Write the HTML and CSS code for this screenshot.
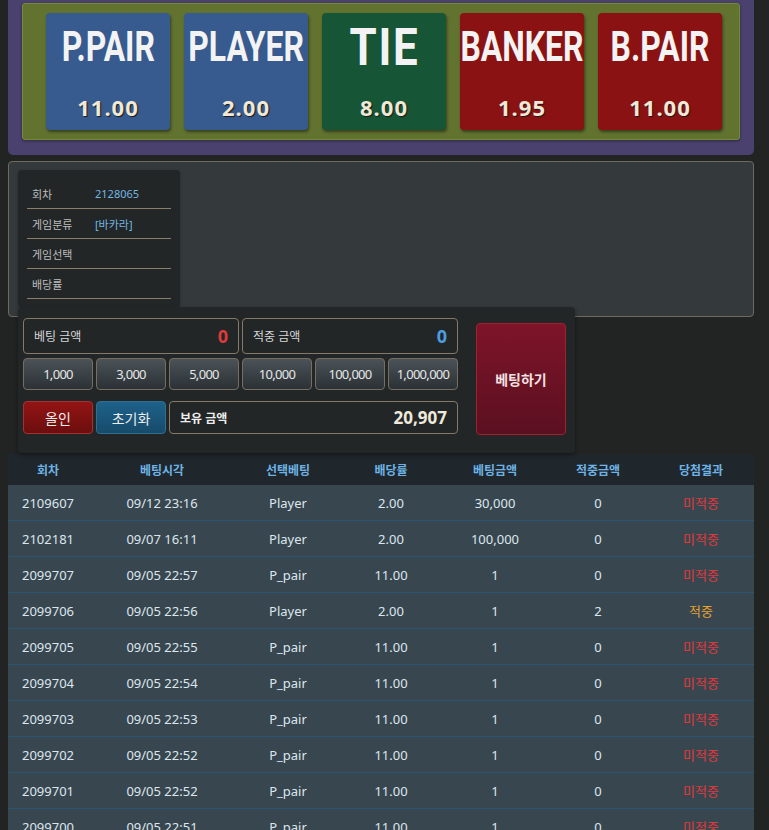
FILE: index.html
```html
<!DOCTYPE html>
<html lang="ko">
<head>
    <meta charset="UTF-8">
    <meta name="viewport" content="width=device-width, initial-scale=1.0">
    <title>바카라</title>
    <link rel="stylesheet" href="styles.css">
</head>
<body>
    <div class="wrap">
        <!-- 배팅 보드 -->
        <div class="board">
            <div class="board-inner">
                <div class="pick pick-blue">
                    <div class="pick-name">P.PAIR</div>
                    <div class="pick-odds">11.00</div>
                </div>
                <div class="pick pick-blue">
                    <div class="pick-name">PLAYER</div>
                    <div class="pick-odds">2.00</div>
                </div>
                <div class="pick pick-green">
                    <div class="pick-name pick-tie">TIE</div>
                    <div class="pick-odds">8.00</div>
                </div>
                <div class="pick pick-red">
                    <div class="pick-name">BANKER</div>
                    <div class="pick-odds">1.95</div>
                </div>
                <div class="pick pick-red">
                    <div class="pick-name">B.PAIR</div>
                    <div class="pick-odds">11.00</div>
                </div>
            </div>
        </div>

        <!-- 게임 정보 -->
        <div class="game-panel">
            <div class="game-info">
                <div class="info-row"><span class="info-label">회차</span><span class="info-value">2128065</span></div>
                <div class="info-row"><span class="info-label">게임분류</span><span class="info-value">[바카라]</span></div>
                <div class="info-row"><span class="info-label">게임선택</span><span class="info-value"></span></div>
                <div class="info-row"><span class="info-label">배당률</span><span class="info-value"></span></div>
            </div>
        </div>

        <!-- 베팅 입력 -->
        <div class="bet-panel">
            <div class="bet-left">
                <div class="bet-sums">
                    <div class="sum-box">
                        <span class="sum-label">베팅 금액</span>
                        <span class="sum-value red">0</span>
                    </div>
                    <div class="sum-box">
                        <span class="sum-label">적중 금액</span>
                        <span class="sum-value blue">0</span>
                    </div>
                </div>
                <div class="chips">
                    <button class="chip">1,000</button>
                    <button class="chip">3,000</button>
                    <button class="chip">5,000</button>
                    <button class="chip">10,000</button>
                    <button class="chip">100,000</button>
                    <button class="chip">1,000,000</button>
                </div>
                <div class="bet-tools">
                    <button class="tool tool-allin">올인</button>
                    <button class="tool tool-reset">초기화</button>
                    <div class="sum-box balance">
                        <span class="sum-label">보유 금액</span>
                        <span class="sum-value">20,907</span>
                    </div>
                </div>
            </div>
            <button class="bet-submit">베팅하기</button>
        </div>

        <!-- 베팅 내역 -->
        <table class="history">
            <colgroup>
                <col style="width:80px">
                <col style="width:148px">
                <col style="width:104px">
                <col style="width:102px">
                <col style="width:106px">
                <col style="width:100px">
                <col style="width:106px">
            </colgroup>
            <thead>
                <tr>
                    <th>회차</th>
                    <th>베팅시각</th>
                    <th>선택베팅</th>
                    <th>배당률</th>
                    <th>베팅금액</th>
                    <th>적중금액</th>
                    <th>당첨결과</th>
                </tr>
            </thead>
            <tbody>
                <tr><td>2109607</td><td>09/12 23:16</td><td>Player</td><td>2.00</td><td>30,000</td><td>0</td><td class="lose">미적중</td></tr>
                <tr><td>2102181</td><td>09/07 16:11</td><td>Player</td><td>2.00</td><td>100,000</td><td>0</td><td class="lose">미적중</td></tr>
                <tr><td>2099707</td><td>09/05 22:57</td><td>P_pair</td><td>11.00</td><td>1</td><td>0</td><td class="lose">미적중</td></tr>
                <tr><td>2099706</td><td>09/05 22:56</td><td>Player</td><td>2.00</td><td>1</td><td>2</td><td class="win">적중</td></tr>
                <tr><td>2099705</td><td>09/05 22:55</td><td>P_pair</td><td>11.00</td><td>1</td><td>0</td><td class="lose">미적중</td></tr>
                <tr><td>2099704</td><td>09/05 22:54</td><td>P_pair</td><td>11.00</td><td>1</td><td>0</td><td class="lose">미적중</td></tr>
                <tr><td>2099703</td><td>09/05 22:53</td><td>P_pair</td><td>11.00</td><td>1</td><td>0</td><td class="lose">미적중</td></tr>
                <tr><td>2099702</td><td>09/05 22:52</td><td>P_pair</td><td>11.00</td><td>1</td><td>0</td><td class="lose">미적중</td></tr>
                <tr><td>2099701</td><td>09/05 22:52</td><td>P_pair</td><td>11.00</td><td>1</td><td>0</td><td class="lose">미적중</td></tr>
                <tr><td>2099700</td><td>09/05 22:51</td><td>P_pair</td><td>11.00</td><td>1</td><td>0</td><td class="lose">미적중</td></tr>
                <tr><td>2099699</td><td>09/05 22:50</td><td>P_pair</td><td>11.00</td><td>1</td><td>0</td><td class="lose">미적중</td></tr>
            </tbody>
        </table>
    </div>
</body>
</html>
```

FILE: styles.css
```css
body {
    margin: 0;
    padding: 0 8px;
    background-color: #222424;
    color: #dde5ec;
    font-family: "Noto Sans", "Noto Sans CJK KR", sans-serif;
    overflow: hidden;
}

.wrap {
    width: 746px;
}

/* 배팅 보드 */
.board {
    background-color: #4b416e;
    border-radius: 0 0 5px 5px;
    padding: 3px 14px 15px;
}

.board-inner {
    display: flex;
    gap: 14px;
    padding: 9px 17px 9px 23px;
    background-color: #627330;
    border: 1px solid #738a3a;
    border-radius: 3px;
    box-shadow: 0 1px 3px rgba(0, 0, 0, 0.4);
}

.pick {
    width: 124px;
    height: 117px;
    border-radius: 4px;
    box-shadow: 1px 2px 3px rgba(0, 0, 0, 0.45);
    display: flex;
    flex-direction: column;
    align-items: center;
    overflow: hidden;
}

.pick-blue { background-color: #375a8f; }
.pick-green { background-color: #165535; }
.pick-red { background-color: #8b1212; }

.pick-name {
    height: 68px;
    display: flex;
    align-items: center;
    justify-content: center;
    font-family: Roboto, "Noto Sans", sans-serif;
    font-weight: 700;
    font-size: 42px;
    line-height: 1;
    color: #f3f3f3;
    transform: scaleX(0.76);
    white-space: nowrap;
}

.pick-tie {
    font-size: 51px;
    letter-spacing: 2px;
    transform: scaleX(0.86);
    padding-left: 2px;
}

.pick-odds {
    margin-top: 13px;
    height: 26px;
    line-height: 26px;
    font-family: "Noto Sans", sans-serif;
    font-weight: 700;
    font-size: 22px;
    letter-spacing: 1px;
    color: #f1e8d6;
    text-shadow: 1px 1px 1px #1a1a1a;
}

/* 게임 정보 */
.game-panel {
    margin-top: 6px;
    height: 156px;
    box-sizing: border-box;
    padding: 8px 9px;
    background-color: #343a3c;
    border: 1px solid #6f6a60;
    border-radius: 4px;
}

.game-info {
    width: 162px;
    box-sizing: border-box;
    padding: 9px 9px 8px;
    background-color: #222627;
    border-radius: 4px;
    box-shadow: 0 1px 3px rgba(0, 0, 0, 0.3);
}

.info-row {
    display: flex;
    align-items: center;
    height: 30px;
    box-sizing: border-box;
    padding: 0 5px;
    border-bottom: 1px solid #8a7e6c;
    font-size: 11px;
}

.info-label {
    width: 63px;
    color: #bdbdbd;
}

.info-value {
    color: #74b6e0;
}

/* 베팅 입력 */
.bet-panel {
    position: relative;
    display: flex;
    align-items: flex-start;
    gap: 18px;
    width: 557px;
    box-sizing: border-box;
    margin: -10px 0 0 10px;
    padding: 11px 9px 18px 5px;
    background-color: #222627;
    border-radius: 4px;
    box-shadow: 0 2px 4px rgba(0, 0, 0, 0.4);
}

.bet-left {
    width: 435px;
}

.bet-sums {
    display: grid;
    grid-template-columns: 1fr 1fr;
    gap: 3px;
    height: 36px;
}

.sum-box {
    display: flex;
    align-items: center;
    justify-content: space-between;
    padding: 0 10px;
    border: 1px solid #857a68;
    border-radius: 4px;
}

.sum-label {
    font-size: 12px;
    color: #d6d6d6;
}

.sum-value {
    font-size: 18px;
    font-weight: 700;
    color: #f0eadc;
}

.sum-value.red { color: #dd3a3a; }
.sum-value.blue { color: #4c9ee0; }

.chips {
    display: grid;
    grid-template-columns: repeat(6, 1fr);
    gap: 3px;
    margin-top: 4px;
}

.chip, .tool {
    font-family: "Noto Sans", "Noto Sans CJK KR", sans-serif;
    border-radius: 4px;
    cursor: pointer;
    padding: 0;
}

.chip {
    height: 32px;
    font-size: 13px;
    letter-spacing: -0.7px;
    color: #e6e6e6;
    background: linear-gradient(to bottom, #4b5358, #2b3135);
    border: 1px solid #776e62;
}

.bet-tools {
    display: grid;
    grid-template-columns: repeat(6, 1fr);
    gap: 3px;
    height: 33px;
    margin-top: 11px;
}

.tool {
    font-size: 14px;
    color: #eeeeee;
}

.tool-allin {
    background: linear-gradient(to bottom, #931414, #6c0e0e);
    border: 1px solid #a43232;
}

.tool-reset {
    background: linear-gradient(to bottom, #1e6189, #174b6b);
    border: 1px solid #2f6f93;
}

.balance {
    grid-column: span 4;
}

.balance .sum-label {
    font-weight: 700;
    color: #eeeeee;
}

.balance .sum-value {
    font-size: 17px;
}

.bet-submit {
    margin-top: 5px;
    width: 90px;
    height: 112px;
    font-family: "Noto Sans CJK KR", sans-serif;
    font-size: 14px;
    font-weight: 700;
    color: #f4e2e2;
    background: linear-gradient(to bottom, #7e1429, #5a1020);
    border: 1px solid #a2202f;
    border-radius: 4px;
    cursor: pointer;
}

/* 베팅 내역 */
.history {
    width: 746px;
    margin-top: 1px;
    table-layout: fixed;
    border-collapse: collapse;
    text-align: center;
}

.history th {
    height: 31px;
    padding: 0;
    background-color: #20272c;
    color: #6db3e6;
    font-size: 12px;
    font-weight: 700;
}

.history td {
    height: 35px;
    padding: 0;
    background-color: #38474f;
    border-bottom: 1px solid #2b5670;
    color: #dde6ee;
    font-size: 13px;
}

.history .lose { color: #e0393c; }
.history .win { color: #eaa233; }
```
